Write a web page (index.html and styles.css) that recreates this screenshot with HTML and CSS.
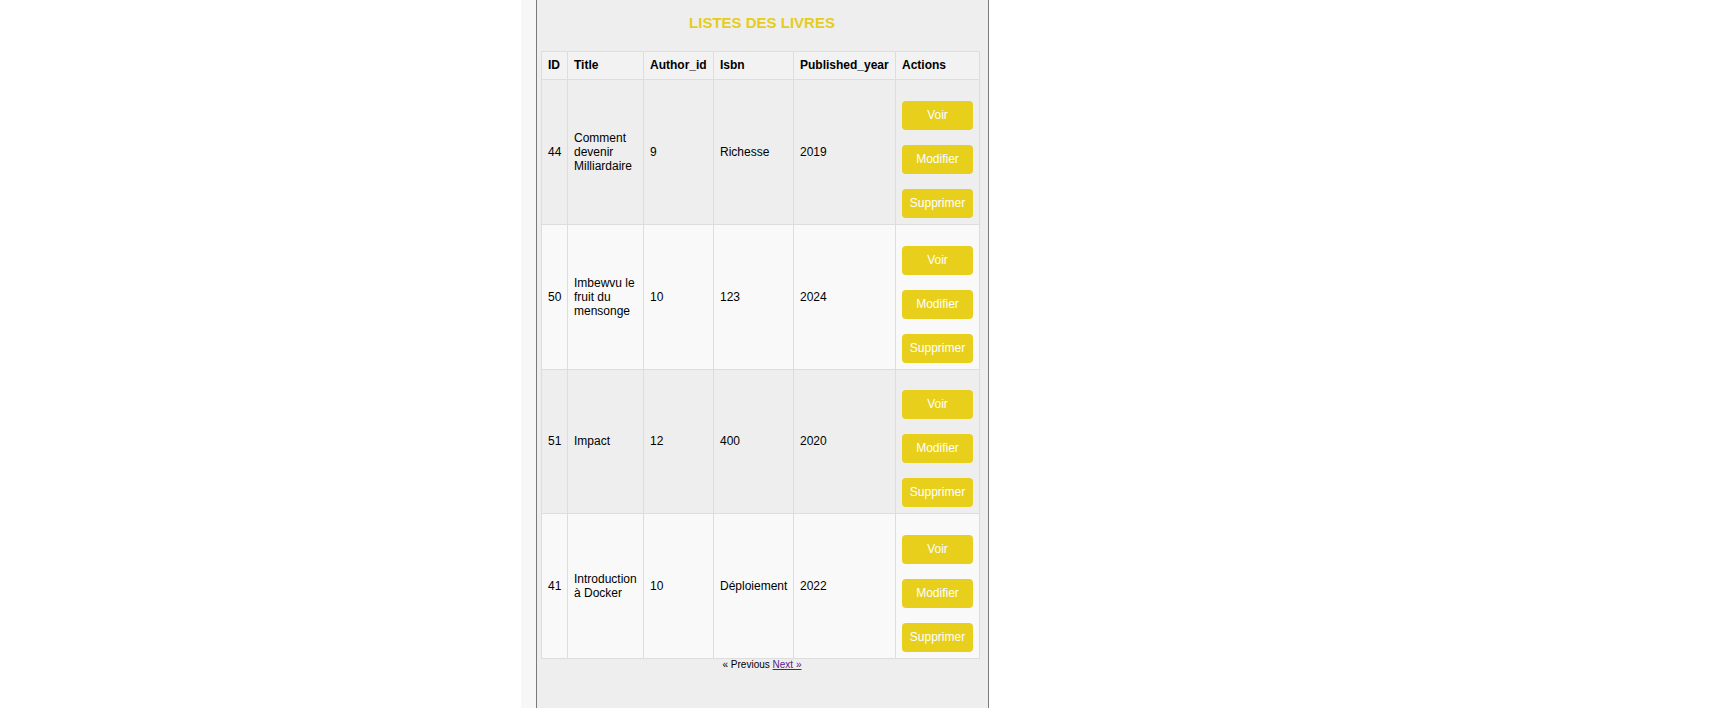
FILE: index.html
```html
<!DOCTYPE html>
<html lang="fr">
<head>
<meta charset="utf-8">
<title>Listes des livres</title>
<link rel="stylesheet" href="styles.css">
</head>
<body>
<div class="page">
  <div class="gutter"></div>
  <div class="shade"></div>
  <main class="panel">
    <h2 class="panel-title">LISTES DES LIVRES</h2>
    <table class="books">
      <colgroup>
        <col class="c-id"><col class="c-title"><col class="c-author"><col class="c-isbn"><col class="c-year"><col class="c-actions">
      </colgroup>
      <thead>
        <tr><th>ID</th><th>Title</th><th>Author_id</th><th>Isbn</th><th>Published_year</th><th>Actions</th></tr>
      </thead>
      <tbody>
        <tr>
          <td>44</td><td>Comment devenir Milliardaire</td><td>9</td><td>Richesse</td><td>2019</td>
          <td><div class="actions"><a class="btn">Voir</a><a class="btn">Modifier</a><a class="btn">Supprimer</a></div></td>
        </tr>
        <tr>
          <td>50</td><td>Imbewvu le fruit du mensonge</td><td>10</td><td>123</td><td>2024</td>
          <td><div class="actions"><a class="btn">Voir</a><a class="btn">Modifier</a><a class="btn">Supprimer</a></div></td>
        </tr>
        <tr>
          <td>51</td><td>Impact</td><td>12</td><td>400</td><td>2020</td>
          <td><div class="actions"><a class="btn">Voir</a><a class="btn">Modifier</a><a class="btn">Supprimer</a></div></td>
        </tr>
        <tr>
          <td>41</td><td>Introduction à Docker</td><td>10</td><td>Déploiement</td><td>2022</td>
          <td><div class="actions"><a class="btn">Voir</a><a class="btn">Modifier</a><a class="btn">Supprimer</a></div></td>
        </tr>
      </tbody>
    </table>
    <div class="pager">« Previous <a href="#" class="pager-link">Next »</a></div>
  </main>
</div>
</body>
</html>
```

FILE: styles.css
```css
html, body {
  margin: 0;
  padding: 0;
  background: #ffffff;
  font-family: "Liberation Sans", Arial, sans-serif;
  color: #000;
}

.page {
  display: flex;
  min-height: 100vh;
}

.gutter {
  width: 521px;
  flex: none;
}

.shade {
  width: 15px;
  flex: none;
  background: #f7f7f7;
}

.panel {
  width: 447px;
  flex: none;
  background: #eeeeee;
  border-left: 1px solid #7a7a7a;
  border-right: 1px solid #7a7a7a;
  padding-left: 4px;
  box-sizing: content-box;
  min-height: 100vh;
}

.panel-title {
  margin: 0 5px 0 0;
  padding: 14px 0 20px;
  font-size: 15px;
  line-height: 17px;
  font-weight: bold;
  color: #e6cc1c;
  text-align: center;
}

.books {
  width: 438px;
  border-collapse: collapse;
  table-layout: fixed;
  font-size: 12px;
  line-height: 14px;
}

.c-id { width: 26px; }
.c-title { width: 76px; }
.c-author { width: 70px; }
.c-isbn { width: 80px; }
.c-year { width: 102px; }
.c-actions { width: 84px; }

.books th,
.books td {
  border: 1px solid #dddddd;
  padding: 6px;
  text-align: left;
  vertical-align: middle;
}

.books th {
  background: #f2f2f2;
  font-weight: bold;
  padding-bottom: 7px;
}

.books tbody tr:nth-child(even) {
  background: #f9f9f9;
}

.actions {
  display: flex;
  flex-direction: column;
  gap: 15px;
  padding-top: 14.75px;
}

.btn {
  display: block;
  height: 29px;
  line-height: 29px;
  background: #e7cf1b;
  color: #ffffff;
  text-align: center;
  border-radius: 4px;
  font-size: 12px;
  text-decoration: none;
}

.pager {
  text-align: center;
  font-size: 10px;
  line-height: 12px;
  margin-right: 5px;
}

.pager-link {
  color: #551a8b;
}
```
